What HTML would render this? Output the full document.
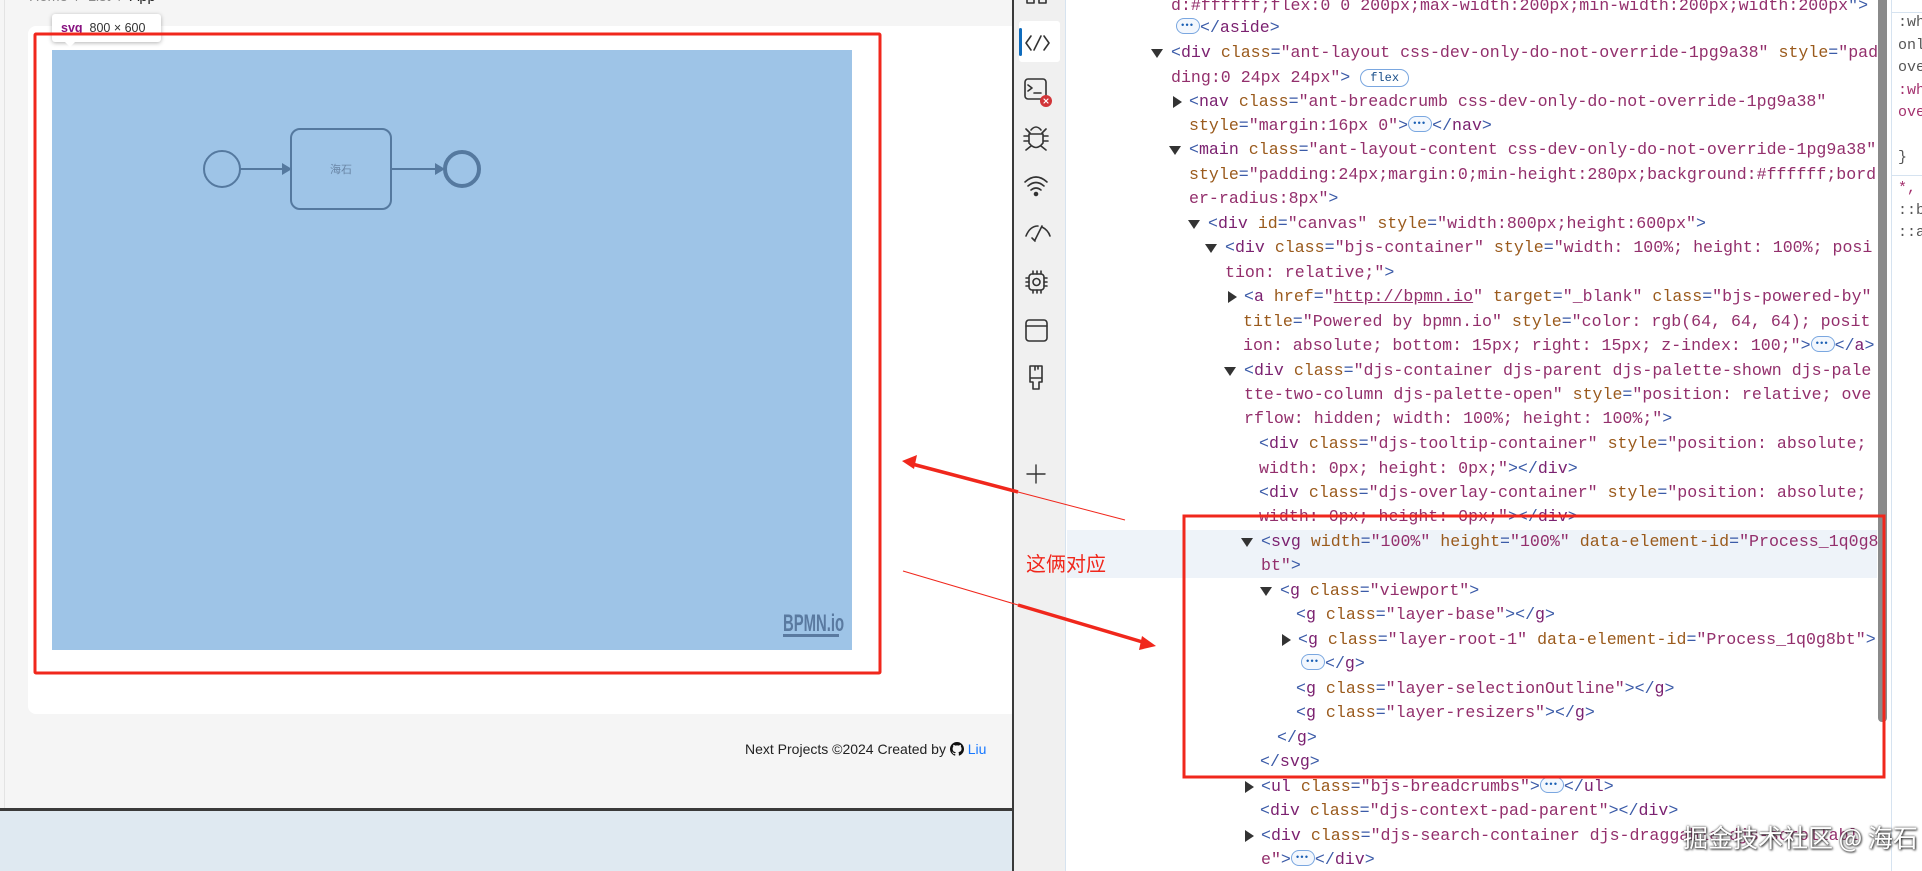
<!DOCTYPE html>
<html><head><meta charset="utf-8"><style>
*{margin:0;padding:0;box-sizing:border-box}
body{width:1922px;height:871px;overflow:hidden;position:relative;background:#fff;font-family:"Liberation Sans","Noto Sans CJK SC",sans-serif}
.abs{position:absolute}
#vp{left:0;top:0;width:1013px;height:809px;background:#f5f5f5;overflow:hidden}
#below{left:0;top:811px;width:1013px;height:60px;background:#dfe9f1}
#bline{left:0;top:808px;width:1014px;height:3px;background:#3a3a3a}
#vline{left:1012px;top:0;width:2px;height:871px;background:#3a3a3a}
#strip{left:1014px;top:0;width:52px;height:871px;background:#f0f0f0;border-right:1px solid #d6e3f0}
#code{left:1067px;top:0;width:823px;height:871px;background:#fff;overflow:hidden;font-family:"Liberation Mono",monospace;font-size:16.6px;color:#8f2c66}
.l{position:absolute;white-space:pre;line-height:24px;height:24px}
.p{color:#3b5ba8}.t{color:#7b2170}.a{color:#9a5a1c}.v{color:#932f6c}.k{color:#222}
.td,.tr{position:absolute;width:0;height:0}
.td{border-left:6px solid transparent;border-right:6px solid transparent;border-top:9px solid #333;top:8px}
.tr{border-top:6px solid transparent;border-bottom:6px solid transparent;border-left:9px solid #333;top:6px}
.el{display:inline-block;width:24px;height:16px;border:1px solid #7aa7e0;border-radius:8px;vertical-align:-2px;position:relative;background:#f3f7fd}
.el:after{content:"•••";position:absolute;left:3px;top:-5px;font-size:9px;color:#1a5fb4;letter-spacing:-1px}
</style></head><body>
<div id="vp" class="abs">
  <div class="abs" style="left:4px;top:0;width:1px;height:809px;background:#e3e3e3"></div>
  <div class="abs" style="left:29px;top:-11px;font-size:14.5px;color:#8c8c8c;white-space:pre">Home  /  List  /  <span style="color:#222">App</span></div>
  <div class="abs" style="left:28px;top:26px;width:990px;height:688px;background:#fff;border-radius:8px"></div>
  <div class="abs" style="left:52px;top:50px;width:800px;height:600px;background:#9ec4e7"></div>
  <svg class="abs" style="left:52px;top:50px" width="800" height="600">
    <g stroke="#55799f" fill="none">
      <circle cx="170" cy="119" r="18" stroke-width="2"/>
      <rect x="239" y="79" width="100" height="80" rx="9" stroke-width="2"/>
      <circle cx="410" cy="119" r="17" stroke-width="4"/>
      <line x1="188" y1="119" x2="232" y2="119" stroke-width="2"/>
      <line x1="340" y1="119" x2="385" y2="119" stroke-width="2"/>
    </g>
    <path d="M230 113 L240 119 L230 125Z M383 113 L393 119 L383 125Z" fill="#55799f"/>
    <text x="289" y="123" font-size="11" fill="#6a86a6" text-anchor="middle" font-family="Noto Sans CJK SC, sans-serif">海石</text>
    <text x="0" y="0" font-size="24" font-weight="bold" fill="#5a7aa0" font-family="Liberation Sans, sans-serif" transform="translate(731,581) scale(0.62,1)">BPMN.io</text>
    <rect x="731" y="584" width="56" height="3" fill="#5a7aa0"/>
  </svg>
  <div class="abs" style="left:52px;top:14px;width:109px;height:28px;background:#fff;border-radius:3px;box-shadow:0 1px 4px rgba(0,0,0,.3);font-size:12.5px;line-height:28px;padding-left:9px;white-space:pre;color:#333"><b style="color:#881280">svg</b>  800 × 600</div>
  <div class="abs" style="left:64px;top:41px;width:0;height:0;border-left:6px solid transparent;border-right:6px solid transparent;border-top:6px solid #fff"></div>
  <div class="abs" style="left:745px;top:741px;font-size:14px;color:#222;white-space:pre">Next Projects ©2024 Created by <svg width="14" height="14" viewBox="0 0 16 16" style="vertical-align:-2px"><path fill="#111" d="M8 0C3.6 0 0 3.6 0 8c0 3.5 2.3 6.5 5.5 7.6.4.1.5-.2.5-.4v-1.4c-2.2.5-2.7-1-2.7-1-.4-.9-.9-1.2-.9-1.2-.7-.5.1-.5.1-.5.8.1 1.2.8 1.2.8.7 1.3 1.9.9 2.4.7.1-.5.3-.9.5-1.1-1.8-.2-3.6-.9-3.6-4 0-.9.3-1.6.8-2.1-.1-.2-.4-1 .1-2.1 0 0 .7-.2 2.200.8.6-.2 1.3-.3 2-.3s1.4.1 2 .3c1.5-1 2.2-.8 2.2-.8.4 1.1.2 1.9.1 2.1.5.6.8 1.3.8 2.1 0 3.1-1.9 3.7-3.6 3.9.3.3.5.8.5 1.5v2.2c0 .2.1.5.6.4C13.7 14.5 16 11.5 16 8c0-4.4-3.6-8-8-8z"/></svg> <span style="color:#1677ff">Liu</span></div>
</div>
<div id="below" class="abs"></div>
<div id="bline" class="abs"></div>
<div id="vline" class="abs"></div>
<div id="strip" class="abs">
  <div class="abs" style="left:5px;top:21px;width:41px;height:41px;background:#fff;border-radius:3px"></div>
  <div class="abs" style="left:5px;top:28px;width:3px;height:28px;background:#0f6cbd;border-radius:2px"></div>
  <svg class="abs" style="left:0;top:0" width="52" height="500" fill="none" stroke="#333" stroke-width="1.6" stroke-linecap="round" stroke-linejoin="round">
    <path d="M13 -6 V3 H20 V-6 M25 -6 V3 H32 V-6"/>
    <path d="M17 36 L12 43 L17 50 M27 36 L20 50 M30 36 L35 43 L30 50"/>
    <rect x="11" y="79" width="21" height="20" rx="3"/><path d="M14 85 L18 88 L14 91 M20 93 H27"/>
    <circle cx="32" cy="101" r="6" fill="#d13438" stroke="none"/><path d="M30 99 L34 103 M34 99 L30 103" stroke="#fff" stroke-width="1.2"/>
    <path d="M17 130 Q22 124 27 130 M15 134 H29 V143 Q22 152 15 143Z M15 136 H10 M29 136 H34 M15 141 H10 M29 141 H34 M16 133 L12 129 M28 133 L32 129 M17 146 L12 150 M27 146 L32 150"/>
    <path d="M11 182 Q22 172 33 182 M14 186 Q22 179 30 186 M17 190 Q22 186 27 190"/><circle cx="22" cy="194" r="1.5" fill="#333"/>
    <path d="M12 236 Q16 226 24 226 M28 227 Q34 230 36 236 M21 240 L28 226 M18 238 L21 241"/>
    <rect x="15" y="274" width="15" height="16" rx="3"/><circle cx="22.5" cy="282" r="3.5"/><path d="M12 278 H15 M12 282 H15 M12 286 H15 M30 278 H33 M30 282 H33 M30 286 H33 M19 271 V274 M23 271 V274 M27 271 V274 M19 290 V293 M23 290 V293 M27 290 V293"/>
    <rect x="12" y="320" width="21" height="21" rx="3"/><path d="M12 326 H33"/>
    <path d="M16 366 H28 V382 H25 V389 H19 V382 H16Z M16 378 H28 M21 366 V370 M24 366 V369"/>
    <path d="M22 465 V483 M13 474 H31" stroke-width="1.4"/>
  </svg>
</div>
<div id="code" class="abs">
<div class="l" style="left:104px;top:-6px"><span class="v">d:#ffffff;flex:0 0 200px;max-width:200px;min-width:200px;width:200px</span><span class="p">"&gt;</span></div>
<div class="l" style="left:109px;top:16px"><span class="el"></span><span class="p">&lt;/</span><span class="t">aside</span><span class="p">&gt;</span></div>
<div class="l" style="left:104px;top:41px"><i class="td" style="left:-20px"></i><span class="p">&lt;</span><span class="t">div</span> <span class="a">class</span><span class="p">=</span><span class="v">"ant-layout css-dev-only-do-not-override-1pg9a38"</span> <span class="a">style</span><span class="p">=</span><span class="v">"pad</span></div>
<div class="l" style="left:104px;top:66px"><span class="v">ding:0 24px 24px"</span><span class="p">&gt;</span> <span style="display:inline-block;border:1px solid #7aa7e0;border-radius:10px;font-size:12px;line-height:16px;padding:0 9px;color:#1a4f8a;vertical-align:1px">flex</span></div>
<div class="l" style="left:122px;top:90px"><i class="tr" style="left:-16px"></i><span class="p">&lt;</span><span class="t">nav</span> <span class="a">class</span><span class="p">=</span><span class="v">"ant-breadcrumb css-dev-only-do-not-override-1pg9a38"</span></div>
<div class="l" style="left:122px;top:114px"><span class="a">style</span><span class="p">=</span><span class="v">"margin:16px 0"</span><span class="p">&gt;</span><span class="el"></span><span class="p">&lt;/</span><span class="t">nav</span><span class="p">&gt;</span></div>
<div class="l" style="left:122px;top:138px"><i class="td" style="left:-20px"></i><span class="p">&lt;</span><span class="t">main</span> <span class="a">class</span><span class="p">=</span><span class="v">"ant-layout-content css-dev-only-do-not-override-1pg9a38"</span></div>
<div class="l" style="left:122px;top:163px"><span class="a">style</span><span class="p">=</span><span class="v">"padding:24px;margin:0;min-height:280px;background:#ffffff;bord</span></div>
<div class="l" style="left:122px;top:187px"><span class="v">er-radius:8px"</span><span class="p">&gt;</span></div>
<div class="l" style="left:141px;top:212px"><i class="td" style="left:-20px"></i><span class="p">&lt;</span><span class="t">div</span> <span class="a">id</span><span class="p">=</span><span class="v">"canvas"</span> <span class="a">style</span><span class="p">=</span><span class="v">"width:800px;height:600px"</span><span class="p">&gt;</span></div>
<div class="l" style="left:158px;top:236px"><i class="td" style="left:-20px"></i><span class="p">&lt;</span><span class="t">div</span> <span class="a">class</span><span class="p">=</span><span class="v">"bjs-container"</span> <span class="a">style</span><span class="p">=</span><span class="v">"width: 100%; height: 100%; posi</span></div>
<div class="l" style="left:158px;top:261px"><span class="v">tion: relative;"</span><span class="p">&gt;</span></div>
<div class="l" style="left:177px;top:285px"><i class="tr" style="left:-16px"></i><span class="p">&lt;</span><span class="t">a</span> <span class="a">href</span><span class="p">=</span><span class="v">"<u>http://bpmn.io</u>"</span> <span class="a">target</span><span class="p">=</span><span class="v">"_blank"</span> <span class="a">class</span><span class="p">=</span><span class="v">"bjs-powered-by"</span></div>
<div class="l" style="left:176px;top:310px"><span class="a">title</span><span class="p">=</span><span class="v">"Powered by bpmn.io"</span> <span class="a">style</span><span class="p">=</span><span class="v">"color: rgb(64, 64, 64); posit</span></div>
<div class="l" style="left:176px;top:334px"><span class="v">ion: absolute; bottom: 15px; right: 15px; z-index: 100;"</span><span class="p">&gt;</span><span class="el"></span><span class="p">&lt;/</span><span class="t">a</span><span class="p">&gt;</span></div>
<div class="l" style="left:177px;top:359px"><i class="td" style="left:-20px"></i><span class="p">&lt;</span><span class="t">div</span> <span class="a">class</span><span class="p">=</span><span class="v">"djs-container djs-parent djs-palette-shown djs-pale</span></div>
<div class="l" style="left:177px;top:383px"><span class="v">tte-two-column djs-palette-open"</span> <span class="a">style</span><span class="p">=</span><span class="v">"position: relative; ove</span></div>
<div class="l" style="left:177px;top:407px"><span class="v">rflow: hidden; width: 100%; height: 100%;"</span><span class="p">&gt;</span></div>
<div class="l" style="left:192px;top:432px"><span class="p">&lt;</span><span class="t">div</span> <span class="a">class</span><span class="p">=</span><span class="v">"djs-tooltip-container"</span> <span class="a">style</span><span class="p">=</span><span class="v">"position: absolute;</span></div>
<div class="l" style="left:192px;top:457px"><span class="v">width: 0px; height: 0px;"</span><span class="p">&gt;&lt;/</span><span class="t">div</span><span class="p">&gt;</span></div>
<div class="l" style="left:192px;top:481px"><span class="p">&lt;</span><span class="t">div</span> <span class="a">class</span><span class="p">=</span><span class="v">"djs-overlay-container"</span> <span class="a">style</span><span class="p">=</span><span class="v">"position: absolute;</span></div>
<div class="abs" style="left:0;top:530px;width:810px;height:48px;background:#eef3f9"></div>
<div class="l" style="left:192px;top:505px"><span class="v">width: 0px; height: 0px;"</span><span class="p">&gt;&lt;/</span><span class="t">div</span><span class="p">&gt;</span></div>
<div class="l" style="left:194px;top:530px"><i class="td" style="left:-20px"></i><span class="p">&lt;</span><span class="t">svg</span> <span class="a">width</span><span class="p">=</span><span class="v">"100%"</span> <span class="a">height</span><span class="p">=</span><span class="v">"100%"</span> <span class="a">data-element-id</span><span class="p">=</span><span class="v">"Process_1q0g8</span></div>
<div class="l" style="left:194px;top:554px"><span class="v">bt"</span><span class="p">&gt;</span></div>
<div class="l" style="left:213px;top:579px"><i class="td" style="left:-20px"></i><span class="p">&lt;</span><span class="t">g</span> <span class="a">class</span><span class="p">=</span><span class="v">"viewport"</span><span class="p">&gt;</span></div>
<div class="l" style="left:229px;top:603px"><span class="p">&lt;</span><span class="t">g</span> <span class="a">class</span><span class="p">=</span><span class="v">"layer-base"</span><span class="p">&gt;&lt;/</span><span class="t">g</span><span class="p">&gt;</span></div>
<div class="l" style="left:231px;top:628px"><i class="tr" style="left:-16px"></i><span class="p">&lt;</span><span class="t">g</span> <span class="a">class</span><span class="p">=</span><span class="v">"layer-root-1"</span> <span class="a">data-element-id</span><span class="p">=</span><span class="v">"Process_1q0g8bt"</span><span class="p">&gt;</span></div>
<div class="l" style="left:234px;top:652px"><span class="el"></span><span class="p">&lt;/</span><span class="t">g</span><span class="p">&gt;</span></div>
<div class="l" style="left:229px;top:677px"><span class="p">&lt;</span><span class="t">g</span> <span class="a">class</span><span class="p">=</span><span class="v">"layer-selectionOutline"</span><span class="p">&gt;&lt;/</span><span class="t">g</span><span class="p">&gt;</span></div>
<div class="l" style="left:229px;top:701px"><span class="p">&lt;</span><span class="t">g</span> <span class="a">class</span><span class="p">=</span><span class="v">"layer-resizers"</span><span class="p">&gt;&lt;/</span><span class="t">g</span><span class="p">&gt;</span></div>
<div class="l" style="left:210px;top:726px"><span class="p">&lt;/</span><span class="t">g</span><span class="p">&gt;</span></div>
<div class="l" style="left:193px;top:750px"><span class="p">&lt;/</span><span class="t">svg</span><span class="p">&gt;</span></div>
<div class="l" style="left:194px;top:775px"><i class="tr" style="left:-16px"></i><span class="p">&lt;</span><span class="t">ul</span> <span class="a">class</span><span class="p">=</span><span class="v">"bjs-breadcrumbs"</span><span class="p">&gt;</span><span class="el"></span><span class="p">&lt;/</span><span class="t">ul</span><span class="p">&gt;</span></div>
<div class="l" style="left:193px;top:799px"><span class="p">&lt;</span><span class="t">div</span> <span class="a">class</span><span class="p">=</span><span class="v">"djs-context-pad-parent"</span><span class="p">&gt;&lt;/</span><span class="t">div</span><span class="p">&gt;</span></div>
<div class="l" style="left:194px;top:824px"><i class="tr" style="left:-16px"></i><span class="p">&lt;</span><span class="t">div</span> <span class="a">class</span><span class="p">=</span><span class="v">"djs-search-container djs-draggable djs-scrollabl</span></div>
<div class="l" style="left:194px;top:848px"><span class="v">e"</span><span class="p">&gt;</span><span class="el"></span><span class="p">&lt;/</span><span class="t">div</span><span class="p">&gt;</span></div>
<div class="abs" style="left:811px;top:0;width:9px;height:722px;background:#8a8a8a;border-radius:0 0 4px 4px"></div>
</div>
<div class="abs" style="left:1891px;top:0;width:31px;height:871px;background:#fff;border-left:1px solid #d6e3f0;overflow:hidden;font-family:'Liberation Mono',monospace;font-size:15px;color:#555;white-space:pre">
  <div class="abs" style="left:0;top:12px;width:31px;height:1px;background:#d6e3f0"></div>
  <div class="abs" style="left:6px;top:12px;line-height:22.5px">:wh
onl
ove
<span style="color:#a3306d">:wh
ove</span>

}</div>
  <div class="abs" style="left:0;top:175px;width:31px;height:1px;background:#d6e3f0"></div>
  <div class="abs" style="left:6px;top:178px;line-height:22px"><span style="color:#a3306d">*,</span>
::b
::a</div>
</div>
<svg class="abs" style="left:0;top:0" width="1922" height="871">
  <rect x="35" y="34" width="845" height="639" fill="none" stroke="#f0271c" stroke-width="3" rx="1"/>
  <rect x="1184" y="516" width="700" height="261" fill="none" stroke="#f0271c" stroke-width="3"/>
  <line x1="1125" y1="520" x2="1018" y2="492" stroke="#f0271c" stroke-width="1"/>
  <line x1="1018" y1="492" x2="912" y2="464" stroke="#f0271c" stroke-width="3.5"/>
  <path d="M902 461 L917 455 L914 469Z" fill="#f0271c"/>
  <line x1="903" y1="571" x2="1018" y2="605" stroke="#f0271c" stroke-width="1"/>
  <line x1="1018" y1="605" x2="1146" y2="643" stroke="#f0271c" stroke-width="3.5"/>
  <path d="M1156 646 L1142 636 L1139 650Z" fill="#f0271c"/>
</svg>
<div class="abs" style="left:1026px;top:548px;font-size:20px;color:#f0271c;font-family:'Noto Sans CJK SC',sans-serif">这俩对应</div>
<div class="abs" style="left:1683px;top:819px;font-size:25px;color:#fff;text-shadow:0 0 2px #333,1px 1px 2px #333;font-family:'Noto Sans CJK SC',sans-serif;white-space:pre">掘金技术社区 @ 海石</div>
</body></html>
